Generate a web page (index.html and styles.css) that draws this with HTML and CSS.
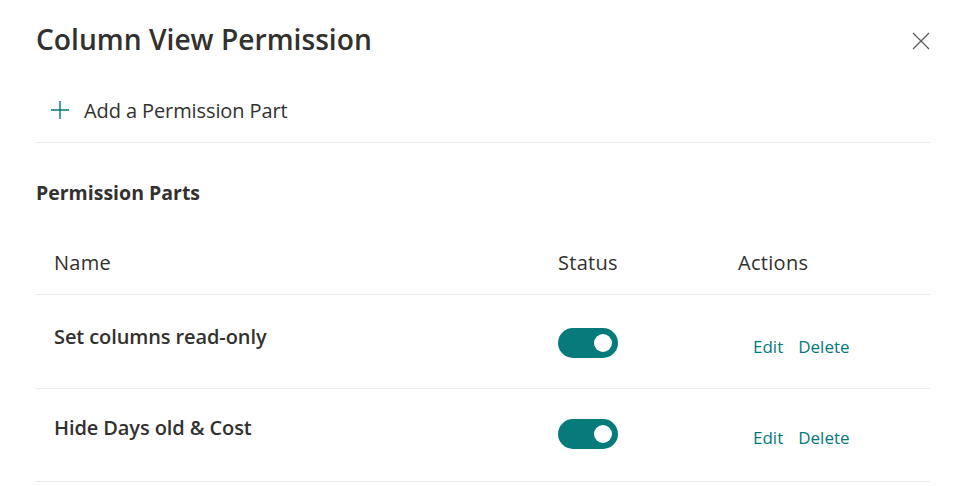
FILE: index.html
```html
<!DOCTYPE html>
<html lang="en">
<head>
<meta charset="utf-8">
<title>Column View Permission</title>
<link rel="stylesheet" href="styles.css">
</head>
<body>
<div class="panel">
  <header class="panel-header">
    <h1 class="panel-title">Column View Permission</h1>
    <button class="close-btn" aria-label="Close">
      <svg width="18" height="18" viewBox="0 0 18 18"><path d="M1 1 L17 17 M17 1 L1 17" stroke="#605e5c" stroke-width="1.3" fill="none"/></svg>
    </button>
  </header>
  <div class="command-bar">
    <button class="add-btn">
      <svg class="add-icon" width="20" height="20" viewBox="0 0 20 20"><path d="M10 1 V19 M1 10 H19" stroke="#03787c" stroke-width="1.4" fill="none"/></svg>
      <span>Add a Permission Part</span>
    </button>
  </div>
  <h2 class="section-title">Permission Parts</h2>
  <div class="table">
    <div class="row head">
      <div class="cell name">Name</div>
      <div class="cell status">Status</div>
      <div class="cell actions">Actions</div>
    </div>
    <div class="row first">
      <div class="cell name strong">Set columns read-only</div>
      <div class="cell status"><span class="toggle"><span class="knob"></span></span></div>
      <div class="cell actions"><a class="link">Edit</a><a class="link">Delete</a></div>
    </div>
    <div class="row last">
      <div class="cell name strong">Hide Days old &amp; Cost</div>
      <div class="cell status"><span class="toggle"><span class="knob"></span></span></div>
      <div class="cell actions"><a class="link">Edit</a><a class="link">Delete</a></div>
    </div>
  </div>
</div>
</body>
</html>
```
FILE: styles.css
```css
html, body {
  margin: 0;
  padding: 0;
  background: #ffffff;
}
body {
  font-family: "Open Sans", "Noto Sans", sans-serif;
  color: #323130;
}
.panel {
  padding: 0 35px 0 36px;
}
.panel-header {
  display: flex;
  justify-content: space-between;
  align-items: flex-start;
  height: 80px;
}
.panel-title {
  margin: 19px 0 0;
  font-size: 28.2px;
  font-weight: 600;
  line-height: 40px;
  color: #323130;
  letter-spacing: 0;
}
.close-btn {
  border: 0;
  background: none;
  padding: 0;
  margin: 32px 0 0;
  width: 18px;
  height: 18px;
  cursor: pointer;
}
.command-bar {
  height: 62px;
  border-bottom: 1px solid #edebe9;
}
.add-btn {
  display: flex;
  align-items: center;
  gap: 14px;
  border: 0;
  background: none;
  padding: 0 0 0 14px;
  height: 60px;
  margin-top: 0;
  font-family: inherit;
  font-size: 20px;
  color: #323130;
  cursor: pointer;
  letter-spacing: -0.1px;
}
.section-title {
  margin: 0;
  padding-top: 36px;
  height: 47px;
  font-size: 19.5px;
  font-weight: 700;
  line-height: 28px;
  letter-spacing: 0;
}
.table {
  display: flex;
  flex-direction: column;
}
.row {
  display: grid;
  grid-template-columns: 522px 180px 1fr;
  height: 93px;
  box-sizing: border-box;
  border-bottom: 1px solid #edebe9;
  align-items: center;
}
.row.first {
  height: 94px;
}
.row.last {
  padding-bottom: 5px;
}
.row.head {
  height: 69px;
}
.cell.name {
  padding-left: 18px;
}
.head .cell {
  font-size: 20px;
  font-weight: 500;
  color: #323130;
  letter-spacing: 0.3px;
  padding-top: 5px;
}
.strong {
  font-size: 20px;
  font-weight: 600;
  letter-spacing: -0.1px;
  position: relative;
  top: -5px;
}
.status {
  padding-top: 2px;
}
.toggle {
  display: flex;
  align-items: center;
  justify-content: flex-end;
  width: 60px;
  height: 30px;
  border-radius: 15px;
  background: #077a7c;
  box-sizing: border-box;
  padding-right: 6px;
}
.knob {
  width: 18px;
  height: 18px;
  border-radius: 50%;
  background: #ffffff;
}
.row:not(.head) .actions {
  padding-left: 15px;
  display: flex;
  gap: 15px;
  position: relative;
  top: 5px;
}
.link {
  display: inline-block;
  font-size: 17px;
  color: #03787c;
  text-decoration: none;
  cursor: pointer;
}
```
